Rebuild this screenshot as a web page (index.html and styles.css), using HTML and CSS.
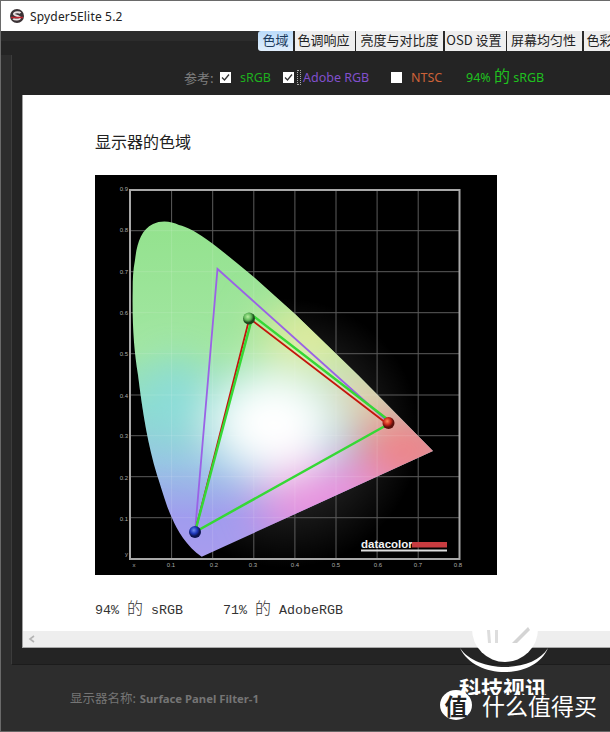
FILE: index.html
```html
<!DOCTYPE html>
<html lang="zh">
<head>
<meta charset="utf-8">
<title>Spyder5Elite 5.2</title>
<link rel="stylesheet" href="styles.css">
</head>
<body>
<div class="window">
  <header class="titlebar">
    <svg class="appicon" width="16" height="16" viewBox="0 0 16 16"><circle cx="8" cy="8" r="7" fill="#3a3235"/><path d="M11.500 5.200C10.500 3.800 5.500 3.800 5 5.800c-.4 2 6.200 2 6 4.200-.2 2-5.600 2-6.800.6" fill="none" stroke="#e8dfe0" stroke-width="2"/><path d="M2 9.500h12" stroke="#c0202c" stroke-width="1.500"/></svg>
    <span class="apptitle">Spyder5Elite 5.2</span>
  </header>
  <nav class="tabbar">
    <span class="tab active">色域</span>
    <span class="tab t1">色调响应</span>
    <span class="tab t2">亮度与对比度</span>
    <span class="tab t3">OSD 设置</span>
    <span class="tab t4">屏幕均匀性</span>
    <span class="tab t5">色彩</span>
  </nav>
  <main class="panel">
    <div class="legend">
      <span class="ref">参考:</span>
      <span class="check on c1"><svg width="9" height="9" viewBox="0 0 9 9"><path d="M1 4.500l2.500 2.500L8 1.500" fill="none" stroke="#333" stroke-width="1.300"/></svg></span>
      <span class="srgb">sRGB</span>
      <span class="check on c2"><svg width="9" height="9" viewBox="0 0 9 9"><path d="M1 4.500l2.500 2.500L8 1.500" fill="none" stroke="#333" stroke-width="1.300"/></svg></span>
      <span class="focus"></span>
      <span class="adobe">Adobe RGB</span>
      <span class="check c3"></span>
      <span class="ntsc">NTSC</span>
      <span class="pct">94% <span class="pct-cjk">的</span> sRGB</span>
    </div>
    <section class="sheet">
      <div class="report">
        <h1 class="heading">显示器的色域</h1>
        <svg class="chart" width="402" height="400" viewBox="0 0 402 400">
          <defs>
            <radialGradient id="glow"><stop offset="0" stop-color="#fff" stop-opacity=".55"/><stop offset=".6" stop-color="#fff" stop-opacity=".1"/><stop offset="1" stop-color="#fff" stop-opacity="0"/></radialGradient>
            <linearGradient id="base" gradientUnits="userSpaceOnUse" x1="0" y1="46" x2="0" y2="382"><stop offset="0" stop-color="#93e28d"/><stop offset=".38" stop-color="#a2e6a2"/><stop offset=".55" stop-color="#8fdccb"/><stop offset=".72" stop-color="#98c4e4"/><stop offset=".88" stop-color="#a09cee"/><stop offset="1" stop-color="#a89cee"/></linearGradient>
            <clipPath id="locus"><path d="M106.700 381.700L338 276L263 200L200 139L160 103Q130 78 116.700 68Q95 52 84 50C76 46 66 45 58 49C46 55 42 68 40 85C38 95 37.700 105 37.700 113C37 150 39 175 43 200C48 240 53 270 62 300C68 318 72 333 77 343C82 355 92 372 106.700 381.700Z"/></clipPath>
            <filter id="soft" x="-60%" y="-60%" width="220%" height="220%"><feGaussianBlur stdDeviation="22"/></filter>
            <radialGradient id="ballR" cx=".4" cy=".35"><stop offset="0" stop-color="#ff8a5a"/><stop offset=".6" stop-color="#c9281c"/><stop offset="1" stop-color="#5c100c"/></radialGradient>
            <radialGradient id="ballG" cx=".4" cy=".35"><stop offset="0" stop-color="#b8f0a0"/><stop offset=".6" stop-color="#5fb858"/><stop offset="1" stop-color="#1c4a1c"/></radialGradient>
            <radialGradient id="ballB" cx=".4" cy=".35"><stop offset="0" stop-color="#6f8cf0"/><stop offset=".6" stop-color="#1d36b8"/><stop offset="1" stop-color="#0c1450"/></radialGradient>
          </defs>
          <rect class="bg" width="402" height="400"/>
          <circle cx="190" cy="258" r="135" fill="url(#glow)"/>
          <g class="grid">
            <path d="M76.600 15V384M117.700 15V384M158.800 15V384M199.900 15V384M241 15V384M282.100 15V384M323.200 15V384"/>
            <path d="M35 55.700H364M35 96.700H364M35 137.700H364M35 178.700H364M35 220H364M35 260.700H364M35 301.700H364M35 342.700H364"/>
          </g>
          <g clip-path="url(#locus)">
            <rect width="402" height="400" fill="url(#base)"/>
            <g filter="url(#soft)">
              <ellipse class="b-cyan" cx="80" cy="225" rx="26" ry="42"/>
              <ellipse class="b-mag" cx="235" cy="330" rx="75" ry="42"/>
              <ellipse class="b-sal" cx="315" cy="275" rx="55" ry="42"/>
              <ellipse class="b-yel" cx="215" cy="160" rx="50" ry="32"/>
              <ellipse class="b-pch" cx="270" cy="218" rx="32" ry="26"/>
              <ellipse class="b-wht" cx="178" cy="248" rx="62" ry="52"/>
              <ellipse class="b-wht" cx="180" cy="248" rx="42" ry="36"/>
            </g>
            <path class="grid-over" d="M76.600 15V384M117.700 15V384M158.800 15V384M199.900 15V384M241 15V384M282.100 15V384M35 55.700H364M35 96.700H364M35 137.700H364M35 178.700H364M35 220H364M35 260.700H364M35 301.700H364M35 342.700H364"/>
          </g>
          <rect class="frame" x="35" y="15" width="329.500" height="369"/>
          <g class="lab ly">
            <text x="33" y="16">0.9</text><text x="33" y="57">0.8</text><text x="33" y="99">0.7</text><text x="33" y="140">0.6</text><text x="33" y="181">0.5</text><text x="33" y="223">0.4</text><text x="33" y="263">0.3</text><text x="33" y="305">0.2</text><text x="33" y="346">0.1</text><text x="33" y="381">y</text>
          </g>
          <g class="lab lx">
            <text x="39" y="392">x</text><text x="76" y="392">0.1</text><text x="119" y="392">0.2</text><text x="158" y="392">0.3</text><text x="200" y="392">0.4</text><text x="241" y="392">0.5</text><text x="283" y="392">0.6</text><text x="323" y="392">0.7</text><text x="363" y="392">0.8</text>
          </g>
          <path class="tri adobe-l" d="M100 357L122.500 94L292 246"/>
          <path class="tri red-l" d="M154.500 143L100 357M154 143L291 248"/>
          <path class="tri green-l" d="M157 140L292 244M156 147L100 357L290 251"/>
          <circle cx="293.500" cy="248" r="6" fill="url(#ballR)"/>
          <circle cx="154" cy="143.500" r="6" fill="url(#ballG)"/>
          <circle cx="100" cy="357" r="6" fill="url(#ballB)"/>
          <text class="brand" x="266" y="373">datacolor</text>
          <rect class="brandbar" x="317" y="367" width="35" height="5.500"/>
          <rect class="brandline" x="266" y="374.500" width="86" height="2"/>
        </svg>
        <p class="result">94% <span class="cjk">的</span> sRGB     71% <span class="cjk">的</span> AdobeRGB</p>
      </div>
      <div class="scrollbar"><svg width="8" height="8" viewBox="0 0 8 8"><path d="M6 1L2 4l4 3" fill="none" stroke="#b4b4b4" stroke-width="1.600"/></svg></div>
    </section>
  </main>
  <footer class="status">显示器名称: <b>Surface Panel Filter-1</b></footer>
</div>
<div class="mark">
  <svg class="mark-art" width="110" height="60" viewBox="0 0 110 60">
    <circle cx="50" cy="12" r="33" fill="#fff"/>
    <path d="M32 13h3l1 13h-3zM40 13h3v13h-3z" fill="#ddd"/>
    <path d="M57 26L73 10l2 3-13 13z" fill="#d4d4d4"/>
    <path d="M5 31C20 63 80 63 93 31C78 56.300 22 56.300 5 31Z" fill="#fff"/>
  </svg>
  <span class="mark-a">科技视讯</span>
  <span class="mark-seal">值</span>
  <span class="mark-b">什么值得买</span>
</div>
</body>
</html>
```

FILE: styles.css
```css
html, body {
  margin: 0;
  padding: 0;
  height: 732px;
  overflow: hidden;
  background: #2d2d2d;
}
body {
  position: relative;
  width: 610px;
  font-family: "Noto Sans", "Noto Sans CJK SC", sans-serif;
}
.window {
  display: flex;
  flex-direction: column;
  height: 732px;
  box-sizing: border-box;
  border-left: 1px solid #6a6a6a;
  border-top: 1px solid #6a6a6a;
  border-bottom: 1px solid #666;
}
.titlebar {
  display: flex;
  align-items: center;
  gap: 5px;
  height: 30px;
  flex: none;
  padding-left: 8px;
  background: #fff;
  box-sizing: border-box;
}
.appicon { flex: none; }
.apptitle {
  font-size: 12px;
  color: #222;
  letter-spacing: .17px;
}
.tabbar {
  display: flex;
  align-items: flex-start;
  gap: 1.500px;
  height: 24px;
  flex: none;
  padding-left: 257px;
  overflow: hidden;
  white-space: nowrap;
  background: linear-gradient(to bottom, #2c2c2c 10px, #242424 10px);
}
.tab {
  flex: none;
  height: 20px;
  line-height: 18px;
  font-family: "Noto Sans CJK SC", sans-serif;
  font-size: 13px;
  text-align: center;
  color: #222;
  background: #eeeeee;
}
.tab.active {
  width: 35px;
  color: #1b3a5c;
  background: linear-gradient(#bcdcfa, #e0eefc);
  border-radius: 3px 0 0 3px;
}
.t1 { width: 60px; padding-right: 2px; box-sizing: border-box; }
.t2 { width: 87px; }
.t3 { width: 61px; padding-right: 2px; box-sizing: border-box; }
.t4 { width: 75px; padding-right: 2px; box-sizing: border-box; }
.t5 { width: 30px; text-align: left; padding-left: 3px; }
.panel {
  display: flex;
  flex-direction: column;
  height: 609px;
  flex: none;
  margin-left: 10px;
  padding-left: 10px;
  background: #242424;
  border-left: 1px solid #3c3c3c;
  border-bottom: 1px solid #1c1c1c;
}
.legend {
  display: flex;
  align-items: center;
  height: 40px;
  flex: none;
  padding-left: 162px;
  padding-top: 4px;
  box-sizing: border-box;
  font-size: 12.500px;
  white-space: nowrap;
}
.ref { color: #7e7e7e; width: 36px; font-family: "Noto Sans CJK SC", sans-serif; font-size: 13px; }
.check {
  display: flex;
  align-items: center;
  justify-content: center;
  flex: none;
  width: 11px;
  height: 11px;
  background: #fff;
}
.c2 { margin-left: 13px; }
.c3 { margin-left: 21px; }
.srgb { color: #1eb01e; margin-left: 9px; width: 30px; }
.focus { width: 4px; height: 15px; margin-left: 3px; border: 1px dotted #aaa; box-sizing: border-box; flex: none; }
.adobe { color: #8150cc; margin-left: 2px; width: 67px; }
.ntsc { color: #cc6238; margin-left: 9px; width: 32px; }
.pct { color: #1fc01f; margin-left: 23px; }
.pct-cjk { font-family: "Noto Sans CJK SC", sans-serif; font-size: 16px; line-height: 15px; }
.sheet {
  display: flex;
  flex-direction: column;
  height: 553px;
  flex: none;
  background: #fff;
  border-bottom: 1px solid #a8a8a8;
  border-left: 1px solid #a0a0a0;
  overflow: hidden;
  box-sizing: border-box;
}
.report {
  flex: 1;
  padding: 34px 0 0 72px;
  min-height: 0;
}
.heading {
  margin: 0 0 22px;
  font-family: "Noto Sans CJK SC", sans-serif;
  font-weight: 400;
  font-size: 16px;
  line-height: 24px;
  color: #222;
}
.chart { display: block; }
.result {
  margin: 24px 0 0;
  font-family: "Liberation Mono", "Noto Sans CJK SC", monospace;
  font-size: 13.330px;
  line-height: 18px;
  color: #333;
  white-space: pre;
}
.cjk { font-family: "Noto Sans CJK SC", sans-serif; font-size: 16px; line-height: 16px; font-weight: 300; }
.scrollbar {
  display: flex;
  align-items: center;
  height: 16px;
  flex: none;
  padding-left: 5px;
  background: #eeeeee;
}
.bg { fill: #000; }
.grid path { fill: none; stroke: #5c5c5c; stroke-width: 1; }
.grid-over { fill: none; stroke: #fff; stroke-opacity: .12; stroke-width: 1; }
.frame { fill: none; stroke: #a8a8a8; stroke-width: 2; }
.b-cyan { fill: #8adcdc; }
.b-mag { fill: #e792de; }
.b-sal { fill: #ee8488; }
.b-yel { fill: #e2ea9c; }
.b-pch { fill: #f2d0a8; }
.b-wht { fill: #fff; }
.lab text { font-family: "Liberation Sans", sans-serif; font-size: 6px; fill: #aaa; }
.ly text { text-anchor: end; }
.lx text { text-anchor: middle; }
.tri { fill: none; stroke-linejoin: miter; }
.adobe-l { stroke: #9a62e6; stroke-width: 1.800; }
.red-l { stroke: #c4140c; stroke-width: 1.800; }
.green-l { stroke: #35d835; stroke-width: 2.500; }
.brand { font-family: "Liberation Sans", sans-serif; font-weight: 700; font-size: 11.500px; fill: #f2f2f2; }
.brandbar { fill: #c83c40; }
.brandline { fill: #dcdcdc; }
.status {
  padding: 25px 0 0 69px;
  font-size: 12.500px;
  line-height: 16px;
  color: #757575;
  font-family: "Noto Sans CJK SC", "Noto Sans", sans-serif;
}
.status b { font-family: "Noto Sans", sans-serif; font-weight: 700; font-size: 11.300px; margin-left: 1px; }
.mark { position: absolute; left: 0; top: 0; width: 610px; height: 732px; pointer-events: none; overflow: hidden; }
.mark-art { position: absolute; left: 455px; top: 617px; }
.mark-a {
  position: absolute;
  left: 459px;
  top: 674px;
  font-family: "Noto Sans CJK SC", sans-serif;
  font-weight: 700;
  font-size: 22px;
  line-height: 26px;
  color: #fff;
  height: 21px;
  overflow: hidden;
}
.mark-seal {
  position: absolute;
  left: 440px;
  top: 690px;
  width: 32px;
  height: 30px;
  border-radius: 50%;
  background: #fff;
  color: #222;
  text-align: center;
  font-family: "Noto Sans CJK SC", sans-serif;
  font-weight: 700;
  font-size: 23px;
  line-height: 30px;
}
.mark-b {
  position: absolute;
  left: 482px;
  top: 689px;
  font-family: "Noto Sans CJK SC", sans-serif;
  font-size: 23px;
  line-height: 33px;
  color: #fff;
}
```
